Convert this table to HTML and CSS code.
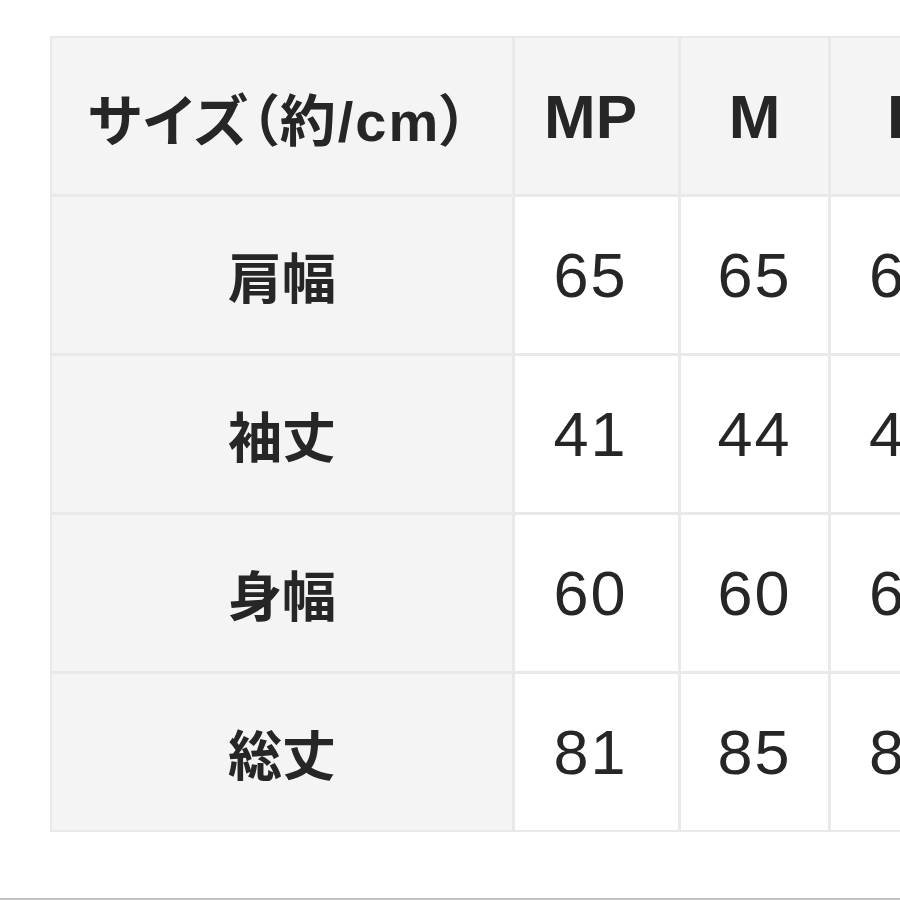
FILE: index.html
```html
<!DOCTYPE html>
<html lang="ja">
<head>
<meta charset="utf-8">
<link rel="stylesheet" href="styles.css">
</head>
<body>
<div class="page">
  <div class="size-table">
    <div class="cell head corner">サイズ（約/cm）</div>
    <div class="cell head">MP</div>
    <div class="cell head">M</div>
    <div class="cell head">L</div>

    <div class="cell label">肩幅</div>
    <div class="cell">65</div>
    <div class="cell">65</div>
    <div class="cell">65</div>

    <div class="cell label">袖丈</div>
    <div class="cell">41</div>
    <div class="cell">44</div>
    <div class="cell">47</div>

    <div class="cell label">身幅</div>
    <div class="cell">60</div>
    <div class="cell">60</div>
    <div class="cell">65</div>

    <div class="cell label">総丈</div>
    <div class="cell">81</div>
    <div class="cell">85</div>
    <div class="cell">89</div>
  </div>
  <div class="bottom-line"></div>
</div>
</body>
</html>
```

FILE: styles.css
```css
html, body {
  margin: 0;
  padding: 0;
  background: #ffffff;
  overflow: hidden;
}
.page {
  width: 900px;
  height: 900px;
  overflow: hidden;
  padding-top: 36px;
  box-sizing: border-box;
}
.size-table {
  margin-left: 50px;
  display: grid;
  grid-template-columns: 460px 163px 147px 150px;
  grid-auto-rows: 156px;
  gap: 3px;
  padding: 2px;
  background: #e9e9e9;
  width: max-content;
  font-family: "Liberation Sans", "Noto Sans CJK JP", sans-serif;
  color: #262626;
}
.cell {
  background: #ffffff;
  display: flex;
  align-items: center;
  justify-content: center;
  font-size: 63px;
  letter-spacing: 2px;
  font-weight: 400;
}
.size-table > .cell:nth-child(4n+2) {
  padding-right: 12px;
}
.head {
  background: #f4f4f4;
  font-weight: 700;
  font-size: 62px;
  letter-spacing: 0;
}
.corner {
  font-size: 56px;
  font-family: "Liberation Sans", "Noto Sans CJK JP", sans-serif;
  font-feature-settings: "palt";
  letter-spacing: 2px;
  padding-right: 6px;
}
.label {
  background: #f4f4f4;
  font-family: "Noto Sans CJK JP", sans-serif;
  font-weight: 700;
  font-size: 54px;
  letter-spacing: 0;
}
.bottom-line {
  margin-top: 66px;
  height: 2px;
  background: #c4c4c4;
}
```
